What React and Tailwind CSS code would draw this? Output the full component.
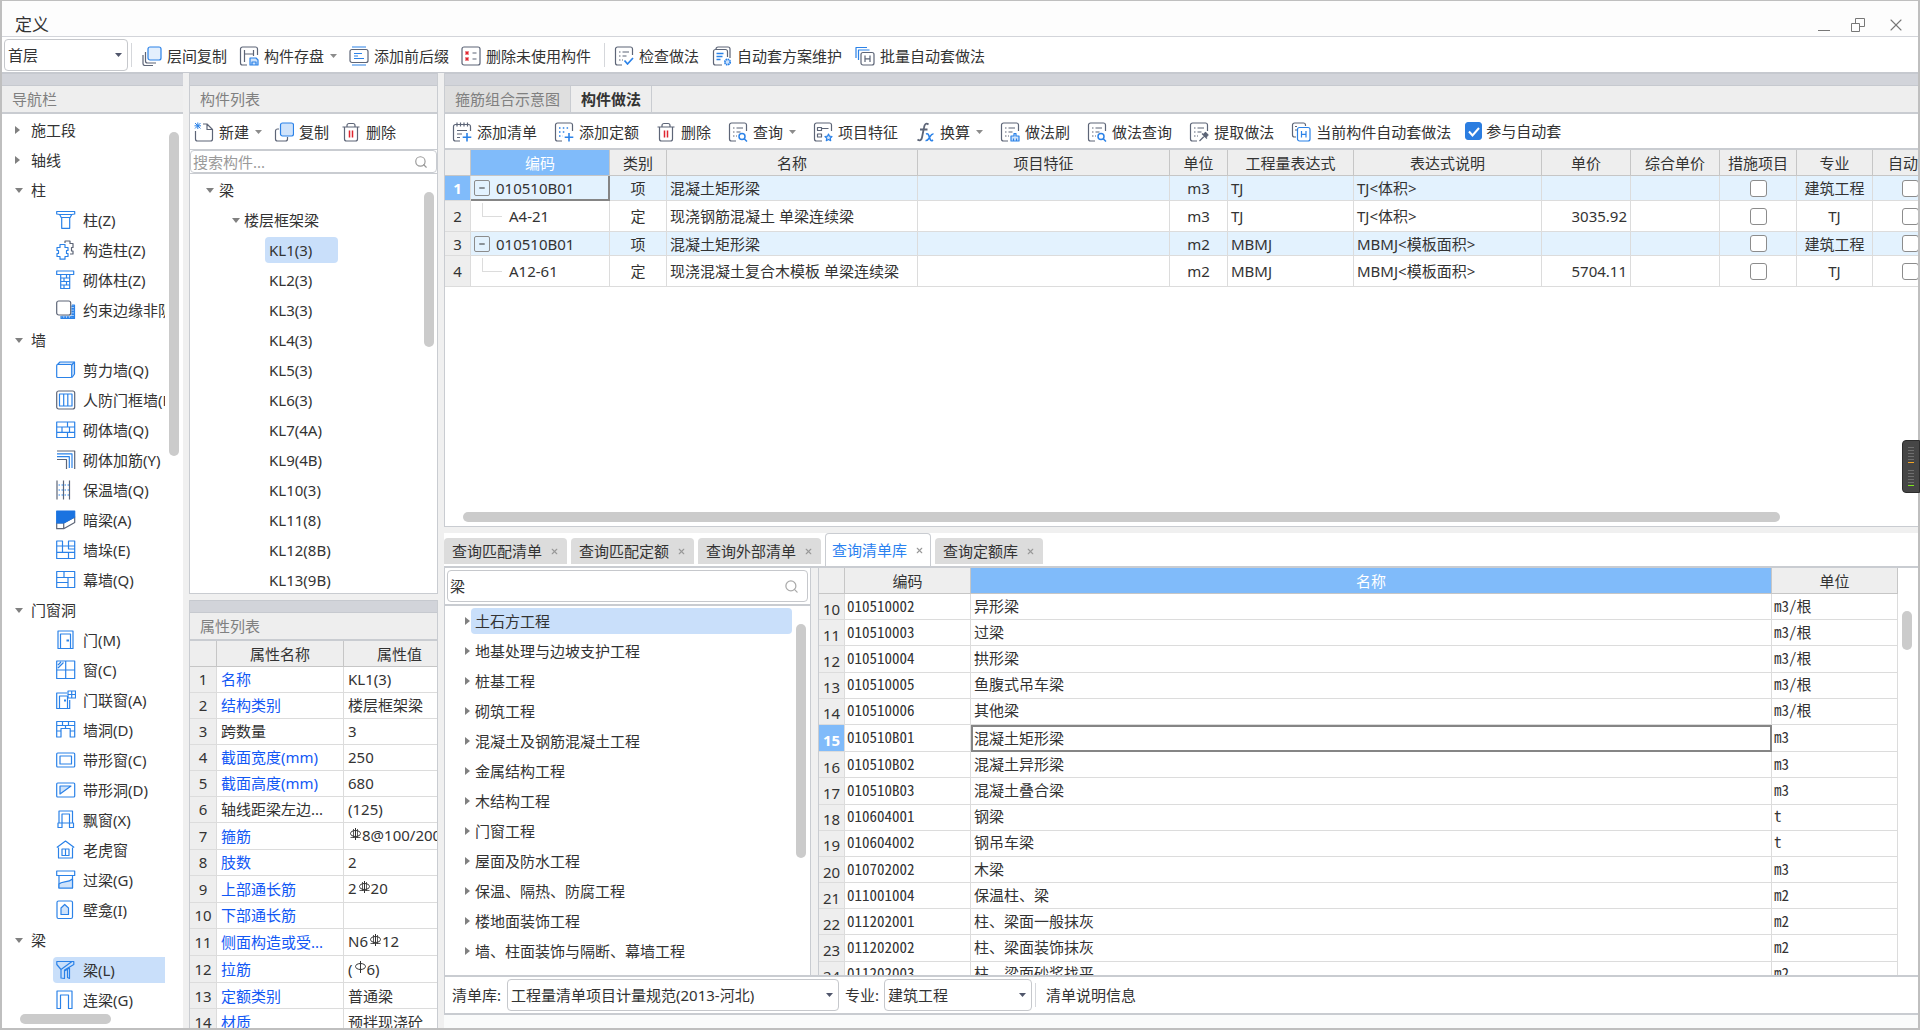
import React from 'react';
import { Search, X, Minus } from 'lucide-react';

const BLUE = '#2b82e8';
const GRAY = '#5d6577';
const PALE = '#cfe3fb';

const Svg = ({ children, className = 'h-5 w-5', stroke = GRAY }) => (
  <svg
    className={`shrink-0 ${className}`}
    viewBox="0 0 20 20"
    fill="none"
    stroke={stroke}
    strokeWidth="1.200"
    strokeLinejoin="round"
    aria-hidden="true"
  >
    {children}
  </svg>
);

// Sheet with text rows, the bottom right corner is left open for a badge
const Sheet = ({ children }) => (
  <Svg>
    <path d="M18.500 9V3a2 2 0 0 0-2-2h-13a2 2 0 0 0-2 2v14a2 2 0 0 0 2 2H8" />
    <path d="M5 6h1.500m2 0h6.500M5 10h1.500m2 0h4M5 14h1.500m1.500 0H9" />
    {children}
  </Svg>
);

const Magnifier = () => (
  <g stroke={BLUE} strokeWidth="1.500">
    <circle cx="14" cy="14.500" r="3" />
    <path d="M16.200 16.700L19 19.500" />
  </g>
);

const icons = {
  layerCopy: (
    <Svg>
      <path d="M3.500 6v9a2 2 0 0 0 2 2H14M1 9v8.500A2 2 0 0 0 3 19.500h8" />
      <rect x="6" y="1" width="13" height="13" rx="2" fill="#e3effd" stroke={BLUE} />
    </Svg>
  ),
  save: (
    <Svg>
      <path d="M18.500 9V3a2 2 0 0 0-2-2h-13a2 2 0 0 0-2 2v14a2 2 0 0 0 2 2H8M5.500 4v12M5.500 8h9M14.500 4v6" />
      <path d="M11 12h6l2 2v5h-8zM13 19v-3h4v3" stroke={BLUE} fill={PALE} />
    </Svg>
  ),
  affix: (
    <Svg>
      <rect x="1" y="3.500" width="18" height="13" rx="2" />
      <path d="M3 1h14M3 19h14M5 7.500h8M5 10h4M5 12.500h10" stroke={BLUE} />
    </Svg>
  ),
  removeUnused: (
    <Svg>
      <rect x="1" y="1" width="18" height="18" rx="2" />
      <path d="M11.500 7h4M11.500 13h4" />
      <path d="M4.500 5.500l3 3m0-3l-3 3M4.500 11.500l3 3m0-3l-3 3" stroke="#e0242f" strokeWidth="1.500" />
    </Svg>
  ),
  check: (
    <Sheet>
      <path d="M10.500 14.500l3 3.500 5.500-6" stroke={BLUE} strokeWidth="1.700" />
    </Sheet>
  ),
  plan: (
    <Svg>
      <path d="M4 3.500V3a2 2 0 0 1 2-2h10a2 2 0 0 1 2 2v9M15.500 11V5.500a2 2 0 0 0-2-2h-10a2 2 0 0 0-2 2V17a2 2 0 0 0 2 2H10" />
      <path d="M4.500 7.500h7M4.500 10.500h6M4.500 13.500h4" stroke={BLUE} strokeWidth="1.500" />
      <circle cx="15.500" cy="16" r="2.700" stroke={BLUE} fill={PALE} strokeDasharray="1.500 .6" strokeWidth="1.800" />
    </Svg>
  ),
  batch: (
    <Svg>
      <path d="M1 12V1.500h11M3.500 14V4h11" stroke={BLUE} />
      <rect x="6" y="6.500" width="13" height="12.500" rx="2" />
      <path d="M10 9.500v6.500M15 9.500v6.500M10 12.800h5" />
    </Svg>
  ),
  create: (
    <Svg>
      <path d="M1.500 9v8a2 2 0 0 0 2 2h13a2 2 0 0 0 2-2V7.500L13 2H9M13 2v5.500h5.500" />
      <path d="M1 1l5.500 5.500M6.500 1L1 6.500M3.800 .5v6.500M.5 3.800h6.500" stroke={BLUE} strokeWidth="1" />
    </Svg>
  ),
  copy: (
    <Svg>
      <path d="M5 7H3.500a2 2 0 0 0-2 2v8a2 2 0 0 0 2 2h8a2 2 0 0 0 2-2v-2" />
      <rect x="6.500" y="1" width="13" height="13" rx="2" fill={PALE} stroke={BLUE} />
    </Svg>
  ),
  trash: (
    <Svg>
      <path d="M1.500 5h17M6 5V3.500a2 2 0 0 1 2-2h4a2 2 0 0 1 2 2V5M3.500 5v12a2 2 0 0 0 2 2h9a2 2 0 0 0 2-2V5" />
      <path d="M8.500 8.500v7M11.500 8.500v7" stroke="#e0242f" strokeWidth="1.500" />
    </Svg>
  ),
  addList: (
    <Svg>
      <path d="M18.500 9V4.500a2 2 0 0 0-2-2h-13a2 2 0 0 0-2 2V17a2 2 0 0 0 2 2H8M5 .5v4M8.500 .5v4M12 .5v4M15.500 .5v4M5 8.500h10M5 12h5M5 15.500h3" />
      <path d="M15 11v8.500M10.700 15.300h8.600" stroke={BLUE} strokeWidth="1.600" />
    </Svg>
  ),
  addQuota: (
    <Svg>
      <path d="M18.500 9V3a2 2 0 0 0-2-2h-13a2 2 0 0 0-2 2v14a2 2 0 0 0 2 2H8" />
      <path d="M5 6h10.500M5 10h7M5 14h4" stroke={BLUE} strokeWidth="1.500" strokeDasharray="1.500 2.300" />
      <path d="M15 11v8.500M10.700 15.300h8.600" stroke={BLUE} strokeWidth="1.600" />
    </Svg>
  ),
  query: (
    <Sheet>
      <Magnifier />
    </Sheet>
  ),
  feature: (
    <Svg>
      <path d="M18.500 9V3a2 2 0 0 0-2-2h-13a2 2 0 0 0-2 2v14a2 2 0 0 0 2 2H9M4.500 5.500h4v3h-4zM4.500 12h4v3h-4zM8.500 6.500h7" />
      <path d="M15.500 12l1 2.200 2.500.3-1.800 1.700.5 2.500-2.200-1.200-2.200 1.200.5-2.500-1.800-1.700 2.500-.3z" stroke={BLUE} fill={PALE} />
    </Svg>
  ),
  formula: (
    <Svg>
      <path d="M13.500 2.500c-2.500-2-4 0-4.500 3L7 15.500c-.5 3-2.500 3.500-4.500 2M5 7.500h7.500" strokeWidth="1.800" />
      <path d="M11 12c2-1 2.500.5 3.500 3.500s1.500 4 3.500 2.500M18.500 12c-2-.5-3 2-4 3.500s-2 3.500-4 3" stroke={BLUE} strokeWidth="1.600" />
    </Svg>
  ),
  brush: (
    <Sheet>
      <path d="M14 11.500h2v2.500h3v5h-8v-5h3zM13.500 16.500V19M16.500 16.500V19" stroke={BLUE} fill={PALE} />
    </Sheet>
  ),
  extract: (
    <Sheet>
      <path d="M10.500 19l5-5M13 11.500l5 5M14.500 12.500l2-2 2.500 2.500-2 2z" fill={GRAY} />
    </Sheet>
  ),
  auto: (
    <Svg>
      <path d="M14.500 4V3a2 2 0 0 0-2-2h-9a2 2 0 0 0-2 2v10a2 2 0 0 0 2 2H5M4 4.500h2M4 8h2" />
      <rect x="6.500" y="5.500" width="12.500" height="13.500" rx="2" stroke={BLUE} />
      <path d="M10.500 9v6.500M15 9v6.500M10.500 12.300h4.500" stroke={BLUE} />
    </Svg>
  ),

  // navigation tree
  column: (
    <Svg stroke={BLUE}>
      <path d="M.7 1.500h18v2.500l-3 .5-1.500 3H5.200l-1.500-3-3-.5zM3.500 4.500h12.500M5.700 7.500v10.800h8V7.500" />
    </Svg>
  ),
  structColumn: (
    <Svg stroke={BLUE}>
      <path d="M9 3V1h5v2.500h3v4h-1.500v3.500H17V14h-3" stroke={GRAY} />
      <path d="M4 4.500h5v3h3v3h-1.500v3H12v3H9v2.700H4v-2.700H1v-3h1.500v-3H1v-3h3z" />
    </Svg>
  ),
  brickColumn: (
    <Svg stroke={BLUE}>
      <path d="M.7 1h17v3.500H.7zM4.700 4.500h9v14h-9zM4.700 8h9M4.700 11.500h9M4.700 15h9M10.500 4.500V8M8 8v3.500M10.500 11.500V15M8 15v3.500" />
    </Svg>
  ),
  edge: (
    <Svg>
      <path d="M16 5h2.500v13.500H5V16" stroke={BLUE} fill={PALE} />
      <path d="M5.500 17.500H16.700V5.500" stroke={BLUE} strokeWidth="2.500" strokeDasharray="2 .7" />
      <rect x=".7" y="1" width="14" height="14" rx="2" fill="#fff" />
    </Svg>
  ),
  shearWall: (
    <Svg stroke={BLUE}>
      <path d="M1 5l3-3h14.500v12L16 17.500" fill={PALE} />
      <rect x=".7" y="4.500" width="15" height="13" rx="1" fill="#fff" />
      <path d="M15.700 5l2.800-3" />
    </Svg>
  ),
  defenceWall: (
    <Svg>
      <rect x=".7" y="1" width="18" height="18" rx="2" />
      <path d="M3.500 4h12.500v12H3.500zM7.700 4v12M11.800 4v12" stroke={BLUE} />
    </Svg>
  ),
  brickWall: (
    <Svg stroke={BLUE}>
      <path d="M.7 2h18v15.500H.7zM.7 7h18M.7 12.300h18M11.500 2v5M6 7v5.300M13.500 7v5.300M11.500 12.300v5.200" />
    </Svg>
  ),
  rebarWall: (
    <Svg>
      <path d="M1 1h17.700v18M1 9.500h9.500V19" />
      <path d="M1 3.800h15V18M1 6.600h12.300V18" stroke={BLUE} />
    </Svg>
  ),
  insulation: (
    <Svg>
      <path d="M1 .5v19M7.500 .5v19M13.500 .5v19" />
      <path d="M2.500 5h11M2.500 10h11M2.500 15h11" stroke={BLUE} strokeDasharray="1.500 1.500" />
    </Svg>
  ),
  hiddenBeam: (
    <Svg>
      <path d="M.7 13h7v5.700h-7zM7.700 13l11-6v5.500l-11 6.200" fill="#fff" />
      <path d="M.7 1h18v6l-11 6h-7z" fill="#1a73e0" stroke="#1a73e0" />
    </Svg>
  ),
  buttress: (
    <Svg stroke={BLUE}>
      <path d="M.7 1h5.800v5h6V1h6.200v17.500H.7zM.7 6h18M.7 12.300h18M6.500 6v6.300M12.500 12.300v6M12.500 6v3h6" />
    </Svg>
  ),
  curtainWall: (
    <Svg stroke={BLUE}>
      <path d="M.7 1.500h18v16H.7zM.7 7.500h18M8 1.500v6M12 7.500v10M.7 12.500H12" />
    </Svg>
  ),
  door: (
    <Svg stroke={BLUE}>
      <path d="M2 1h15v17.500H2zM4.500 18.500V4h10v14.500" />
      <path d="M10.500 10.500h2.500" strokeWidth="2" />
    </Svg>
  ),
  window: (
    <Svg stroke={BLUE}>
      <path d="M.7 1h18v17.500H.7zM9.700 1v17.500M.7 10h18M2 8l5.500-5.500M2 5l3-3" />
    </Svg>
  ),
  doorWindow: (
    <Svg stroke={BLUE}>
      <path d="M11 3H.7v15.500h13V10M3.500 18.500V6H11M11.500 6v12.500" />
      <path d="M12 1h7.500v7H12zM15.700 1v7M12 4.500h7.500" />
      <path d="M8 10.500h2" strokeWidth="2" />
    </Svg>
  ),
  wallHole: (
    <Svg stroke={BLUE}>
      <path d="M.7 1.500h18v15.500h-4.500V8.500H5V17H.7zM.7 5.500h18M6.500 1.500v4M12.500 1.500v4M.7 11H5M14.200 11h4.500M9.500 5.500v3" />
    </Svg>
  ),
  stripWindow: (
    <Svg stroke={BLUE}>
      <rect x=".7" y="3" width="18" height="14" rx="1" />
      <rect x="4" y="6" width="11.500" height="8" />
    </Svg>
  ),
  stripHole: (
    <Svg stroke={BLUE}>
      <rect x=".7" y="3" width="18" height="14" rx="1" />
      <path d="M4 6h11L4 14z" fill={PALE} />
    </Svg>
  ),
  bayWindow: (
    <Svg stroke={BLUE}>
      <path d="M3 13V1h13.500v12M6 13V4h7.500v9M6 13h7.500" />
      <path d="M2 13h4v4.500H2zM13.500 13h4v4.500h-4z" />
    </Svg>
  ),
  dormer: (
    <Svg stroke={BLUE}>
      <path d="M.8 7.500L9.500 1l8.700 6.500M2.500 7.500v10.500h14V7.500M2.500 18h14" />
      <path d="M6 9h7v6.500H6zM9.500 9v6.500" />
    </Svg>
  ),
  lintel: (
    <Svg stroke={BLUE}>
      <path d="M.7 1h18v4.500H.7zM3 5.500h13.500V18H3z" />
      <path d="M3 14c3-3 9-1 13.500-5v9H3z" fill={PALE} />
    </Svg>
  ),
  niche: (
    <Svg stroke={BLUE}>
      <rect x="1" y="1" width="15.500" height="17.500" rx="1.500" />
      <path d="M5 14.500V8l3.700-3.500L12.500 8v6.500z" fill={PALE} />
    </Svg>
  ),
  beam: (
    <Svg stroke={BLUE}>
      <path d="M.8 1.500h17v3L8.500 10v8.500L5 18V9.500L.8 4.500zM5 9.500L16 1.500M8.500 11l5-3v10.500l-2-1V9.500" />
    </Svg>
  ),
  couplingBeam: (
    <Svg stroke={BLUE}>
      <path d="M1 18.500V1h15v17.500h-3.500V5h-8v13.500z" />
    </Svg>
  ),
};

// HRB400 mark when `lines` is set, plain HPB300 mark otherwise
const Rebar = ({ lines }) => (
  <svg className="mb-1.5 inline h-3 w-[14px]" viewBox="0 0 14 12" fill="none" stroke="#333" strokeWidth="1" aria-hidden="true">
    <ellipse cx="7.500" cy="5.500" rx="5" ry="3" />
    <path d="M7.500 0v12" />
    {lines && <path d="M5.500 1v9M9.500 1v9M2.500 9.500h10" strokeWidth=".8" />}
  </svg>
);

const Caret = ({ className = 'text-[#8c8c8c]' }) => (
  <svg className={`h-1 w-[7px] shrink-0 ${className}`} viewBox="0 0 7 4" fill="currentColor" aria-hidden="true">
    <path d="M0 0h7L3.500 4z" />
  </svg>
);

const Arrow = ({ open }) =>
  open ? (
    <svg className="h-[5px] w-2 shrink-0" viewBox="0 0 8 5" fill="#808080" aria-hidden="true">
      <path d="M0 0h8L4 5z" />
    </svg>
  ) : (
    <svg className="h-2 w-[5px] shrink-0" viewBox="0 0 5 8" fill="#808080" aria-hidden="true">
      <path d="M0 0v8l5-4z" />
    </svg>
  );

const Tool = ({ icon, label, menu }) => (
  <button type="button" className="flex shrink-0 items-center whitespace-nowrap">
    {icons[icon]}
    <span className="ml-[5px]">{label}</span>
    {menu && <span className="ml-1.5"><Caret /></span>}
  </button>
);

const Divider = () => <div className="h-6 w-px shrink-0 bg-[#d5d7db]" />;

const SelectBox = ({ id, label, value, className }) => (
  <div className={`relative h-8 shrink-0 ${className}`}>
    <select
      id={id}
      aria-label={label}
      defaultValue={value}
      className="h-full w-full appearance-none rounded border border-[#c6c8cc] bg-white pl-[3px] pr-5"
    >
      <option>{value}</option>
    </select>
    <span className="pointer-events-none absolute inset-y-0 right-1.5 flex items-center">
      <Caret className="text-[#50566b]" />
    </span>
  </div>
);

const PanelHead = ({ title }) => (
  <>
    <div className="h-[13px] shrink-0 border-y border-[#c6c9cf] bg-[#d2d4da]" />
    <h2 className="h-7 shrink-0 border-b-2 border-[#c9ccd1] bg-[#eee] pl-2.5 leading-[26px] text-[#808080]">{title}</h2>
  </>
);

const navTree = [
  { name: '施工段' },
  { name: '轴线' },
  {
    name: '柱',
    items: [
      ['column', '柱(Z)'],
      ['structColumn', '构造柱(Z)'],
      ['brickColumn', '砌体柱(Z)'],
      ['edge', '约束边缘非阴影区'],
    ],
  },
  {
    name: '墙',
    items: [
      ['shearWall', '剪力墙(Q)'],
      ['defenceWall', '人防门框墙(RF)'],
      ['brickWall', '砌体墙(Q)'],
      ['rebarWall', '砌体加筋(Y)'],
      ['insulation', '保温墙(Q)'],
      ['hiddenBeam', '暗梁(A)'],
      ['buttress', '墙垛(E)'],
      ['curtainWall', '幕墙(Q)'],
    ],
  },
  {
    name: '门窗洞',
    items: [
      ['door', '门(M)'],
      ['window', '窗(C)'],
      ['doorWindow', '门联窗(A)'],
      ['wallHole', '墙洞(D)'],
      ['stripWindow', '带形窗(C)'],
      ['stripHole', '带形洞(D)'],
      ['bayWindow', '飘窗(X)'],
      ['dormer', '老虎窗'],
      ['lintel', '过梁(G)'],
      ['niche', '壁龛(I)'],
    ],
  },
  {
    name: '梁',
    items: [
      ['beam', '梁(L)'],
      ['couplingBeam', '连梁(G)'],
    ],
  },
];

const components = [
  'KL1(3)', 'KL2(3)', 'KL3(3)', 'KL4(3)', 'KL5(3)', 'KL6(3)',
  'KL7(4A)', 'KL9(4B)', 'KL10(3)', 'KL11(8)', 'KL12(8B)', 'KL13(9B)',
];

const properties = [
  ['名称', 'KL1(3)', true],
  ['结构类别', '楼层框架梁', true],
  ['跨数量', '3', false],
  ['截面宽度(mm)', '250', true],
  ['截面高度(mm)', '680', true],
  ['轴线距梁左边...', '(125)', false],
  ['箍筋', <><Rebar lines />8@100/200(2)</>, true],
  ['肢数', '2', true],
  ['上部通长筋', <>2<Rebar lines />20</>, true],
  ['下部通长筋', '', true],
  ['侧面构造或受...', <>N6<Rebar lines />12</>, true],
  ['拉筋', <>(<Rebar />6)</>, true],
  ['定额类别', '普通梁', true],
  ['材质', '预拌现浇砼', true],
];

const methods = [
  { code: '010510B01', kind: '项', name: '混凝土矩形梁', unit: 'm3', expr: 'TJ', note: 'TJ<体积>', price: '', major: '建筑工程', parent: true },
  { code: 'A4-21', kind: '定', name: '现浇钢筋混凝土 单梁连续梁', unit: 'm3', expr: 'TJ', note: 'TJ<体积>', price: '3035.92', major: 'TJ' },
  { code: '010510B01', kind: '项', name: '混凝土矩形梁', unit: 'm2', expr: 'MBMJ', note: 'MBMJ<模板面积>', price: '', major: '建筑工程', parent: true },
  { code: 'A12-61', kind: '定', name: '现浇混凝土复合木模板 单梁连续梁', unit: 'm2', expr: 'MBMJ', note: 'MBMJ<模板面积>', price: '5704.11', major: 'TJ' },
];

const chapters = [
  '土石方工程', '地基处理与边坡支护工程', '桩基工程', '砌筑工程', '混凝土及钢筋混凝土工程', '金属结构工程',
  '木结构工程', '门窗工程', '屋面及防水工程', '保温、隔热、防腐工程', '楼地面装饰工程', '墙、柱面装饰与隔断、幕墙工程',
];

const listItems = [
  [10, '010510002', '异形梁', 'm3/根'],
  [11, '010510003', '过梁', 'm3/根'],
  [12, '010510004', '拱形梁', 'm3/根'],
  [13, '010510005', '鱼腹式吊车梁', 'm3/根'],
  [14, '010510006', '其他梁', 'm3/根'],
  [15, '010510B01', '混凝土矩形梁', 'm3'],
  [16, '010510B02', '混凝土异形梁', 'm3'],
  [17, '010510B03', '混凝土叠合梁', 'm3'],
  [18, '010604001', '钢梁', 't'],
  [19, '010604002', '钢吊车梁', 't'],
  [20, '010702002', '木梁', 'm3'],
  [21, '011001004', '保温柱、梁', 'm2'],
  [22, '011202001', '柱、梁面一般抹灰', 'm2'],
  [23, '011202002', '柱、梁面装饰抹灰', 'm2'],
  [24, '011202003', '柱、梁面砂浆找平', 'm2'],
];

const TitleBar = () => (
  <header className="flex h-9 shrink-0 items-center justify-between border-b border-[#d3d5da] bg-[#fdfdfd] pl-[13px] pr-3">
    <h1 className="pt-3 text-[17px] leading-6">定义</h1>
    <div className="flex items-center gap-[21px] pt-3 text-[#777]">
      <button type="button" aria-label="最小化" className="flex h-4 w-3 items-end pb-0.5">
        <span className="h-px w-3 bg-[#777]" />
      </button>
      <button type="button" aria-label="还原">
        <svg className="h-[14px] w-[14px]" viewBox="0 0 14 14" fill="none" stroke="currentColor" aria-hidden="true">
          <path d="M.5 5.500h8v8h-8zM4.500 5.500v-5h9v8h-5" />
        </svg>
      </button>
      <button type="button" aria-label="关闭">
        <X className="h-5 w-5" strokeWidth={1.3} />
      </button>
    </div>
  </header>
);

const MainToolbar = () => (
  <div className="flex h-9 shrink-0 items-center border-b border-[#c6c9cf] bg-white pl-0.5">
    <SelectBox label="楼层" value="首层" className="mr-[3px] w-[124px]" />
    <Divider />
    <div className="ml-2.5 mr-[13px] flex items-center gap-3 pt-0.5">
      <Tool icon="layerCopy" label="层间复制" />
      <Tool icon="save" label="构件存盘" menu />
      <Tool icon="affix" label="添加前后缀" />
      <Tool icon="removeUnused" label="删除未使用构件" />
    </div>
    <Divider />
    <div className="ml-[9px] flex items-center gap-[13px] pt-0.5">
      <Tool icon="check" label="检查做法" />
      <Tool icon="plan" label="自动套方案维护" />
      <Tool icon="batch" label="批量自动套做法" />
    </div>
  </div>
);

const NavPanel = () => (
  <nav className="flex w-[181px] shrink-0 flex-col overflow-hidden bg-white">
    <PanelHead title="导航栏" />
    <div className="flex min-h-0 flex-1">
      <div className="w-[163px] shrink-0 overflow-hidden pt-px">
        {navTree.map((group) => (
          <React.Fragment key={group.name}>
            <div className="flex h-[30px] items-center">
              <span className="ml-[13px] mr-[5px] flex w-[11px] items-center">
                <Arrow open={Boolean(group.items)} />
              </span>
              {group.name}
            </div>
            {group.items?.map(([icon, label]) => (
              <div key={label} className="flex h-[30px] items-center pl-[51px]">
                <div
                  className={`flex h-[26px] w-full items-center gap-[7px] overflow-hidden whitespace-nowrap rounded-l pl-[3px] ${
                    icon === 'beam' ? 'bg-[#c9dffa]' : ''
                  }`}
                >
                  {icons[icon]}
                  {label}
                </div>
              </div>
            ))}
          </React.Fragment>
        ))}
      </div>
      <div className="pl-1 pt-[18px]">
        <div className="h-[324px] w-2.5 rounded-full bg-[#cbcbcb]" />
      </div>
    </div>
    <div className="h-3.5 shrink-0 pl-[18px]">
      <div className="h-2.5 w-[91px] rounded-full bg-[#cbcbcb]" />
    </div>
  </nav>
);

const ComponentList = () => (
  <section className="flex min-h-0 flex-1 flex-col border-x border-[#c9ccd1] bg-white">
    <PanelHead title="构件列表" />
    <div className="flex h-9 shrink-0 items-center gap-3 border-b border-[#c9ccd1] pl-1">
      <Tool icon="create" label="新建" menu />
      <Tool icon="copy" label="复制" />
      <Tool icon="trash" label="删除" />
    </div>
    <label className="flex h-[23px] shrink-0 items-center rounded border border-[#c9ccd1] pr-2">
      <input placeholder="搜索构件..." aria-label="搜索构件" className="min-w-0 flex-1 pl-0.5 outline-none placeholder:text-[#9a9a9a]" />
      <Search className="h-[14px] w-[14px] text-[#999]" strokeWidth={2} />
    </label>
    <div className="flex min-h-0 flex-1 border-y border-[#c9ccd1] pt-px">
      <div className="flex-1 overflow-hidden">
        <div className="flex h-[30px] items-center gap-[5px] pl-4"><Arrow open />梁</div>
        <div className="flex h-[30px] items-center gap-1 pl-[42px]"><Arrow open />楼层框架梁</div>
        {components.map((name, i) => (
          <div key={name} className="flex h-[30px] items-center pl-[75px]">
            <span className={`h-[26px] min-w-[73px] rounded pl-1 leading-[26px] ${i === 0 ? 'bg-[#c9dffa]' : ''}`}>{name}</span>
          </div>
        ))}
      </div>
      <div className="pr-[3px] pt-[17px]">
        <div className="h-[155px] w-2.5 rounded-full bg-[#cbcbcb]" />
      </div>
    </div>
  </section>
);

const cell = 'overflow-hidden whitespace-nowrap border-b border-r border-[#dcdcdc] p-0';
const headCell = 'h-[26px] overflow-hidden whitespace-nowrap border-b border-r border-[#c6c6c6] bg-[#eee] p-0 font-normal';

const PropertyList = () => (
  <section className="flex h-[428px] shrink-0 flex-col overflow-hidden border-x border-[#c9ccd1] bg-white">
    <PanelHead title="属性列表" />
    <div className="min-h-0 flex-1 overflow-hidden">
      <table className="h-[394px] w-[266px] table-fixed border-separate border-spacing-0">
        <thead>
          <tr>
            <th className={`${headCell} w-[27px]`} />
            <th className={`${headCell} w-[127px]`}>属性名称</th>
            <th className={headCell}>属性值</th>
          </tr>
        </thead>
        <tbody>
          {properties.map(([name, value, blue], i) => (
            <tr key={name}>
              <td className={`${cell} border-[#c6c6c6] bg-[#eee] text-center`}>{i + 1}</td>
              <td className={`${cell} pl-1 ${blue ? 'text-[#1258f5]' : ''}`}>{name}</td>
              <td className={`${cell} pl-1`}>{value}</td>
            </tr>
          ))}
        </tbody>
      </table>
    </div>
  </section>
);

const box = 'block h-[17px] w-[17px] appearance-none rounded-[3px] border border-[#8c8c8c] bg-white';

const MethodTable = () => (
  <table className="h-[137px] w-[1504px] table-fixed border-separate border-spacing-0">
    <thead>
      <tr>
        <th className={`${headCell} w-[26px]`} />
        <th className={`${headCell} w-[139px] !bg-[#80bbfa] text-white`}>编码</th>
        <th className={`${headCell} w-[57px]`}>类别</th>
        <th className={`${headCell} w-[251px]`}>名称</th>
        <th className={`${headCell} w-[252px]`}>项目特征</th>
        <th className={`${headCell} w-[58px]`}>单位</th>
        <th className={`${headCell} w-[126px]`}>工程量表达式</th>
        <th className={`${headCell} w-[188px]`}>表达式说明</th>
        <th className={`${headCell} w-[89px]`}>单价</th>
        <th className={`${headCell} w-[89px]`}>综合单价</th>
        <th className={`${headCell} w-[77px]`}>措施项目</th>
        <th className={`${headCell} w-[76px]`}>专业</th>
        <th className={headCell}>自动套</th>
      </tr>
    </thead>
    <tbody>
      {methods.map((m, i) => (
        <tr key={i} className={m.parent ? 'bg-[#e3f2fe]' : 'bg-white'}>
          <td className={`${cell} border-[#c6c6c6] text-center ${i === 0 ? 'bg-[#80bbfa] font-bold text-white' : 'bg-[#eee]'}`}>{i + 1}</td>
          <td className={i === 0 ? 'overflow-hidden border-b-2 border-r-2 border-[#858585] p-0' : cell}>
            {m.parent ? (
              <div className="flex items-center pl-[3px]">
                <button type="button" aria-label="折叠" className="mr-1.5 flex h-4 w-4 items-center justify-center rounded-xs border border-[#8c8c8c]">
                  <Minus className="h-2 w-2" strokeWidth={3} />
                </button>
                {m.code}
              </div>
            ) : (
              <div className="flex h-[26px] pl-[11px]">
                <span className="mr-[7px] h-[14px] w-5 border-b border-l border-[#dcdcdc]" />
                <span className="leading-[26px]">{m.code}</span>
              </div>
            )}
          </td>
          <td className={`${cell} text-center`}>{m.kind}</td>
          <td className={`${cell} pl-[3px]`}>{m.name}</td>
          <td className={cell} />
          <td className={`${cell} text-center`}>{m.unit}</td>
          <td className={`${cell} pl-[3px]`}>{m.expr}</td>
          <td className={`${cell} pl-[3px]`}>{m.note}</td>
          <td className={`${cell} pr-[3px] text-right`}>{m.price}</td>
          <td className={cell} />
          <td className={cell}>
            <input type="checkbox" aria-label={`措施项目 ${i + 1}`} className={`${box} mx-auto`} />
          </td>
          <td className={`${cell} text-center`}>{m.major}</td>
          <td className={cell}>
            <input type="checkbox" aria-label={`自动套 ${i + 1}`} className={`${box} mx-auto`} />
          </td>
        </tr>
      ))}
    </tbody>
  </table>
);

const MethodPanel = () => (
  <section className="flex min-h-0 flex-1 flex-col border-b border-l border-[#c9ccd1] bg-white">
    <div className="h-[13px] shrink-0 border-y border-[#c6c9cf] bg-[#d2d4da]" />
    <div className="flex h-7 shrink-0 border-b-2 border-[#c9ccd1] bg-[#eee]">
      <button type="button" className="border-r border-[#c9ccd1] bg-[#dfdfdf] px-2.5 text-[#808080]">箍筋组合示意图</button>
      <button type="button" className="border-r border-[#c9ccd1] px-2.5 font-bold">构件做法</button>
    </div>
    <div className="flex h-9 shrink-0 items-center overflow-hidden border-b-2 border-[#c9ccd1] pl-[7px]">
      <div className="flex shrink-0 items-center gap-[17px] pt-0.5">
        <Tool icon="addList" label="添加清单" />
        <Tool icon="addQuota" label="添加定额" />
        <Tool icon="trash" label="删除" />
        <Tool icon="query" label="查询" menu />
        <Tool icon="feature" label="项目特征" />
        <Tool icon="formula" label="换算" menu />
        <Tool icon="brush" label="做法刷" />
        <Tool icon="query" label="做法查询" />
        <Tool icon="extract" label="提取做法" />
        <Tool icon="auto" label="当前构件自动套做法" />
      </div>
      <label className="relative ml-3.5 flex shrink-0 items-center gap-1 whitespace-nowrap">
        <input type="checkbox" defaultChecked className="peer h-[18px] w-[17px] appearance-none rounded-[3px] border border-[#2b7de0] checked:bg-[#2b7de0]" />
        <svg className="pointer-events-none absolute left-0.5 top-1 hidden h-3.5 w-3.5 peer-checked:block" viewBox="0 0 14 14" fill="none" stroke="#fff" strokeWidth="2" aria-hidden="true">
          <path d="M2 6.500l3.500 4L12 3" />
        </svg>
        参与自动套
      </label>
    </div>
    <div className="min-h-0 flex-1 overflow-hidden">
      <MethodTable />
    </div>
    <div className="h-[14px] shrink-0 pl-[18px] pr-[138px]">
      <div className="h-2.5 rounded-full bg-[#cbcbcb]" />
    </div>
  </section>
);

const queryTabs = ['查询匹配清单', '查询匹配定额', '查询外部清单', '查询清单库', '查询定额库'];

const QueryTabs = () => (
  <div className="flex h-[35px] shrink-0 items-end gap-1 border-b-2 border-[#c9ccd1] bg-white">
    {queryTabs.map((tab) => {
      const active = tab === '查询清单库';
      return (
        <div
          key={tab}
          className={`flex items-center gap-2 rounded-t ${
            active ? 'h-[33px] border border-b-0 border-[#c9ccd1] px-1.5 text-[#2b82f0]' : 'mb-0.5 h-[26px] bg-[#dcdcdc] px-2'
          }`}
        >
          <button type="button">{tab}</button>
          <button type="button" aria-label={`关闭${tab}`}>
            <X className="h-[9px] w-[9px] text-[#999]" strokeWidth={3} />
          </button>
        </div>
      );
    })}
  </div>
);

const ChapterTree = () => (
  <div className="flex w-[367px] shrink-0 flex-col border-x border-[#c9ccd1] bg-white">
    <div className="shrink-0 border-b-2 border-[#c9ccd1] px-0.5 py-0.5">
      <label className="flex h-8 items-center rounded border border-[#c6c8cc] pr-2">
        <input defaultValue="梁" aria-label="查询" className="min-w-0 flex-1 pl-0.5 outline-none" />
        <Search className="h-[15px] w-[15px] text-[#aaa]" strokeWidth={2} />
      </label>
    </div>
    <div className="flex min-h-0 flex-1">
      <div className="flex-1 overflow-hidden">
        {chapters.map((name, i) => (
          <div key={name} className="flex h-[30px] items-center pl-5">
            <span className="mr-px flex w-[5px]"><Arrow /></span>
            <span className={`h-[26px] flex-1 rounded pl-1 leading-[26px] ${i === 0 ? 'bg-[#c9dffa]' : ''}`}>{name}</span>
          </div>
        ))}
      </div>
      <div className="pl-1 pr-1 pt-[18px]">
        <div className="h-[234px] w-2.5 rounded-full bg-[#cbcbcb]" />
      </div>
    </div>
  </div>
);

const ListTable = () => (
  <div className="flex min-w-0 flex-1 border-l border-[#c9ccd1] bg-white">
    <div className="min-w-0 flex-1 overflow-hidden">
      <table className="h-[420px] w-full table-fixed border-separate border-spacing-0">
        <thead>
          <tr>
            <th className={`${headCell} w-[26px]`} />
            <th className={`${headCell} w-[126px]`}>编码</th>
            <th className={`${headCell} !bg-[#80bbfa] text-white`}>名称</th>
            <th className={`${headCell} w-[126px]`}>单位</th>
          </tr>
        </thead>
        <tbody className="font-['Noto_Sans_Mono_CJK_SC','Liberation_Mono','Noto_Sans_CJK_SC',monospace]">
          {listItems.map(([no, code, name, unit]) => (
            <tr key={code}>
              <td
                className={`${cell} border-[#c6c6c6] pt-1 text-center font-['Noto_Sans',sans-serif] leading-5 ${
                  no === 15 ? 'bg-[#80bbfa] font-bold text-white' : 'bg-[#eee]'
                }`}
              >
                {no}
              </td>
              <td className={`${cell} pb-0.5 pl-0.5`}>{code}</td>
              <td className={no === 15 ? 'overflow-hidden border-2 border-[#858585] p-0 pb-0.5 pl-px' : `${cell} pb-0.5 pl-[3px]`}>{name}</td>
              <td className={`${cell} pb-0.5 pl-0.5`}>{unit}</td>
            </tr>
          ))}
        </tbody>
      </table>
    </div>
    <div className="pl-1 pr-1.5 pt-[43px]">
      <div className="h-[39px] w-2.5 rounded-full bg-[#cbcbcb]" />
    </div>
  </div>
);

const QueryPanel = () => (
  <section className="flex h-[495px] shrink-0 flex-col bg-white">
    <QueryTabs />
    <div className="flex min-h-0 flex-1 gap-[7px] bg-[#f0f0f0]">
      <ChapterTree />
      <ListTable />
    </div>
    <footer className="flex h-10 shrink-0 items-center border-y-2 border-l border-[#c9ccd1] pl-[7px]">
      <label htmlFor="library" className="mr-1.5 whitespace-nowrap">清单库:</label>
      <SelectBox id="library" value="工程量清单项目计量规范(2013-河北)" className="mr-1.5 w-[332px]" />
      <label htmlFor="major" className="mr-[5px] whitespace-nowrap">专业:</label>
      <SelectBox id="major" value="建筑工程" className="mr-[3px] w-[148px]" />
      <Divider />
      <button type="button" className="ml-2.5 whitespace-nowrap">清单说明信息</button>
    </footer>
    <div className="h-[13px] shrink-0 bg-[#fafbfb]" />
  </section>
);

// Floating level meter docked to the right edge
const meter = [0, 1, 2, 3, 4];

const LevelMeter = () => (
  <div className="fixed right-0 top-[440px] flex h-[53px] w-[18px] flex-col gap-[7px] rounded-l border border-[#2c2c2c] bg-[#464646] pl-[5px] pt-1.5">
    {['bg-[#f5a623]', 'bg-[#7ee81c]'].map((color) => (
      <div key={color} className="flex w-1.5 flex-col gap-0.5">
        {meter.map((n) => <span key={n} className="h-px bg-[#6e6e6e]" />)}
        <span className={`h-px ${color}`} />
      </div>
    ))}
  </div>
);

function App() {
  return (
    <div className="flex h-screen flex-col overflow-hidden border-x-2 border-b-2 border-t border-[#bfbfbf] bg-[#f0f0f0] font-['Noto_Sans','Noto_Sans_CJK_SC',sans-serif] text-[15px] leading-5 text-[#333]">
      <TitleBar />
      <MainToolbar />
      <main className="flex min-h-0 flex-1 gap-1.5">
        <NavPanel />
        <div className="flex w-[249px] shrink-0 flex-col gap-1.5">
          <ComponentList />
          <PropertyList />
        </div>
        <div className="flex min-w-0 flex-1 flex-col gap-1.5">
          <MethodPanel />
          <QueryPanel />
        </div>
      </main>
      <LevelMeter />
    </div>
  );
}

export default App;
